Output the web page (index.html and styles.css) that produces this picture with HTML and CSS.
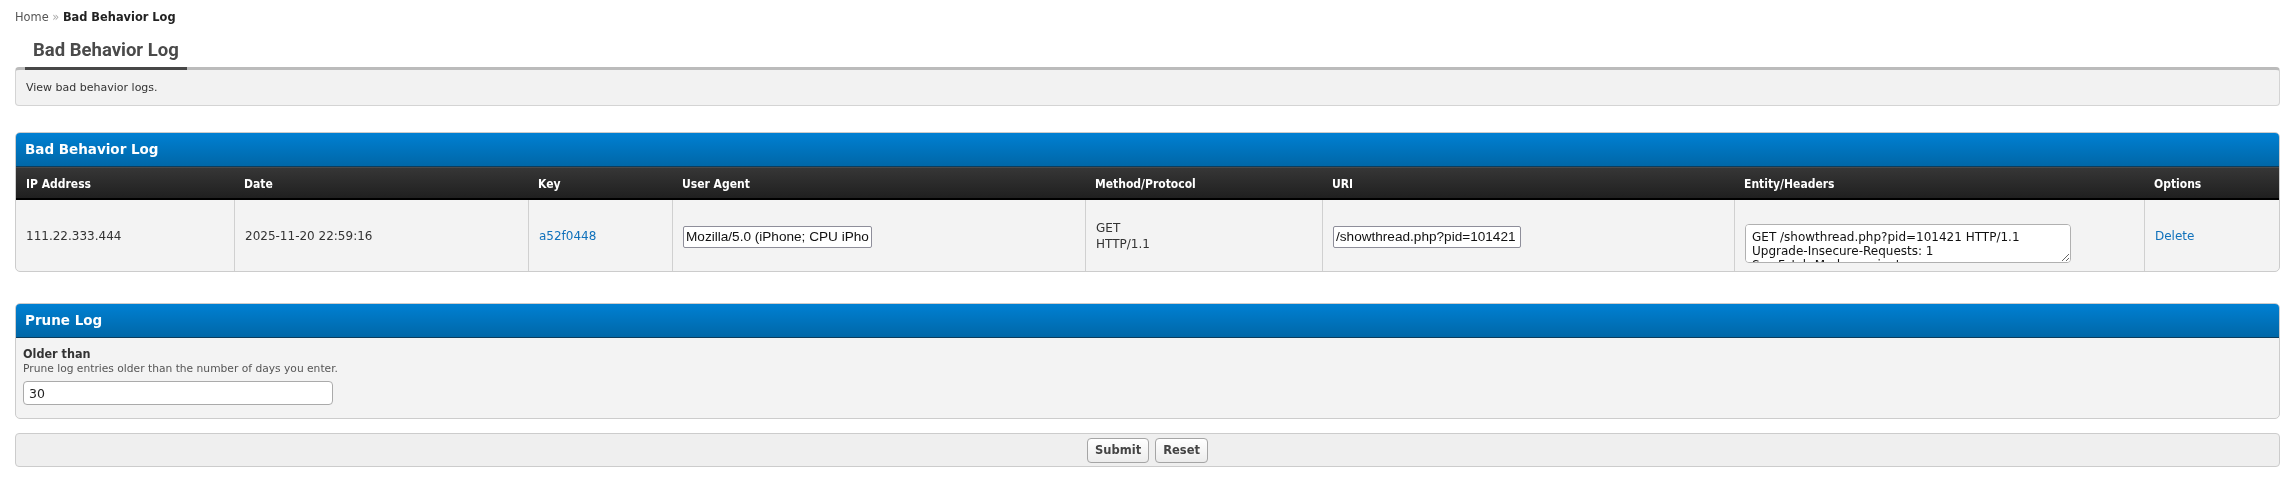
FILE: index.html
```html
<!DOCTYPE html>
<html>
<head>
<meta charset="utf-8">
<title>Bad Behavior Log</title>
<link rel="stylesheet" href="styles.css">
</head>
<body>
<div class="breadcrumb"><a class="crumb-link" href="#">Home</a> <span class="raquo">»</span> <span class="crumb-current">Bad Behavior Log</span></div>

<div class="page-tabs">
  <ul class="tabs"><li class="tab active">Bad Behavior Log</li></ul>
  <div class="tab-desc">View bad behavior logs.</div>
</div>

<div class="box log-box">
  <div class="box-head">Bad Behavior Log</div>
  <table class="grid">
    <colgroup>
      <col class="c-ip"><col class="c-date"><col class="c-key"><col class="c-ua"><col class="c-method"><col class="c-uri"><col class="c-entity"><col class="c-opt">
    </colgroup>
    <thead>
      <tr><th>IP Address</th><th>Date</th><th>Key</th><th>User Agent</th><th>Method/Protocol</th><th>URI</th><th>Entity/Headers</th><th>Options</th></tr>
    </thead>
    <tbody>
      <tr>
        <td>111.22.333.444</td>
        <td>2025-11-20 22:59:16</td>
        <td><a class="link" href="#">a52f0448</a></td>
        <td><input class="field ua-field" type="text" value="Mozilla/5.0 (iPhone; CPU iPhone OS 18_6 like Mac OS X)" readonly></td>
        <td class="method">GET<br>HTTP/1.1</td>
        <td><input class="field uri-field" type="text" value="/showthread.php?pid=101421" readonly></td>
        <td class="entity-cell"><textarea class="entity" readonly>GET /showthread.php?pid=101421 HTTP/1.1
Upgrade-Insecure-Requests: 1
Sec-Fetch-Mode: navigate</textarea></td>
        <td><a class="link" href="#">Delete</a></td>
      </tr>
    </tbody>
  </table>
</div>

<form class="box prune-box">
  <div class="box-head">Prune Log</div>
  <div class="prune-body">
    <label class="prune-label">Older than</label>
    <div class="prune-desc">Prune log entries older than the number of days you enter.</div>
    <input class="days-field" type="text" value="30">
  </div>
</form>

<div class="form-buttons">
  <button class="btn" type="button">Submit</button>
  <button class="btn" type="button">Reset</button>
</div>
</body>
</html>
```
FILE: styles.css
```css
* { box-sizing: border-box; }

html, body { background: #fff; }

body {
  margin: 0;
  padding: 10px 15px 0;
  font-family: "DejaVu Sans", "Open Sans", sans-serif;
  font-size: 11px;
  color: #333;
}

.breadcrumb {
  height: 15px;
  line-height: 15px;
  font-size: 11.4px;
  color: #555;
}
.crumb-link { color: #555; text-decoration: none; }
.raquo { color: #aaa; }
.crumb-current { color: #222; font-weight: bold; }

.page-tabs { margin-top: 14px; }

.tabs {
  list-style: none;
  margin: 0 0 -3px;
  padding: 0 0 0 10px;
  display: flex;
  position: relative;
  z-index: 1;
}
.tab {
  padding: 0 8px 5px;
  font-family: "Roboto", "Open Sans", sans-serif;
  font-size: 18.5px;
  font-weight: bold;
  line-height: 23px;
  color: #4a4a4a;
  border-bottom: 3px solid #474747;
}

.tab-desc {
  background: #f2f2f2;
  border: 1px solid #d4d4d4;
  border-top: 3px solid #bbb;
  border-radius: 4px;
  height: 39px;
  padding: 0 10px;
  line-height: 35px;
  font-size: 11px;
  color: #333;
}

.box {
  display: block;
  margin: 0;
  border: 1px solid #ccc;
  border-radius: 5px;
  background: #f3f3f3;
  overflow: hidden;
}
.log-box { margin-top: 26px; }
.prune-box { margin-top: 31px; }

.box-head {
  height: 34px;
  padding: 0 9px;
  background: linear-gradient(#0080d3, #0067a7);
  border-bottom: 1px solid #0b3c5c;
  color: #fff;
  font-family: "DejaVu Sans", sans-serif;
  font-stretch: normal;
  font-weight: bold;
  font-size: 13.5px;
  line-height: 33px;
}

.grid {
  width: 100%;
  border-collapse: separate;
  border-spacing: 0;
  table-layout: fixed;
  font-family: "DejaVu Sans", sans-serif;
  font-size: 12px;
}
.c-ip { width: 218px; }
.c-date { width: 294px; }
.c-key { width: 144px; }
.c-ua { width: 413px; }
.c-method { width: 237px; }
.c-uri { width: 412px; }
.c-entity { width: 410px; }
.c-opt { width: 135px; }

.grid th {
  height: 33px;
  padding: 0 10px;
  text-align: left;
  background: linear-gradient(#373737, #1e1e1e);
  box-shadow: inset 0 1px 0 #4a4a4a, inset 0 -2px 0 #000;
  color: #fff;
  font-family: "DejaVu Sans Condensed", "DejaVu Sans", sans-serif;
  font-stretch: condensed;
  font-weight: bold;
  font-size: 12px;
}
.grid td {
  height: 71px;
  padding: 0 10px;
  vertical-align: middle;
  color: #333;
  border-left: 1px solid #d0d0d0;
  white-space: nowrap;
}
.grid td:first-child { border-left: 0; }

.method { line-height: 16px; }

.link { color: #0f71bb; text-decoration: none; }

.field {
  display: block;
  height: 22px;
  padding: 0 2px;
  border: 1px solid #8e8e9a;
  border-radius: 2px;
  background: #fff;
  font-family: "Liberation Sans", Arial, sans-serif;
  font-size: 13.6px;
  color: #111;
  margin-top: 2px;
}
.ua-field { width: 189px; }
.uri-field { width: 188px; }

.grid td.entity-cell {
  vertical-align: top;
  padding-top: 24px;
}
.entity {
  display: block;
  width: 326px;
  height: 39px;
  padding: 5px 6px 0;
  border: 1px solid #b0b0b0;
  border-radius: 4px;
  background: #fff;
  font-family: "DejaVu Sans", sans-serif;
  font-size: 12px;
  line-height: 14px;
  color: #111;
  resize: both;
  overflow-y: scroll;
  white-space: pre;
}

.prune-body {
  padding: 8px 7px 13px;
}
.prune-label {
  display: block;
  font-family: "DejaVu Sans Condensed", "DejaVu Sans", sans-serif;
  font-stretch: condensed;
  font-weight: bold;
  font-size: 12.5px;
  line-height: 15px;
  color: #333;
}
.prune-desc {
  font-size: 10.7px;
  line-height: 15px;
  color: #555;
}
.days-field {
  display: block;
  margin-top: 5px;
  width: 310px;
  height: 24px;
  padding: 0 5px;
  border: 1px solid #aaa;
  border-radius: 4px;
  background: #fff;
  font-family: "DejaVu Sans", sans-serif;
  font-size: 12.5px;
  color: #222;
}

.form-buttons {
  margin-top: 14px;
  height: 34px;
  border: 1px solid #ccc;
  border-radius: 4px;
  background: #efefef;
  display: flex;
  justify-content: center;
  align-items: center;
  gap: 6px;
}
.btn {
  height: 25px;
  padding: 0 7px;
  border: 1px solid #a5a5a5;
  border-radius: 4px;
  background: linear-gradient(#fff, #ececec);
  font-family: "DejaVu Sans", sans-serif;
  font-weight: bold;
  font-size: 11.5px;
  color: #444;
}
```
